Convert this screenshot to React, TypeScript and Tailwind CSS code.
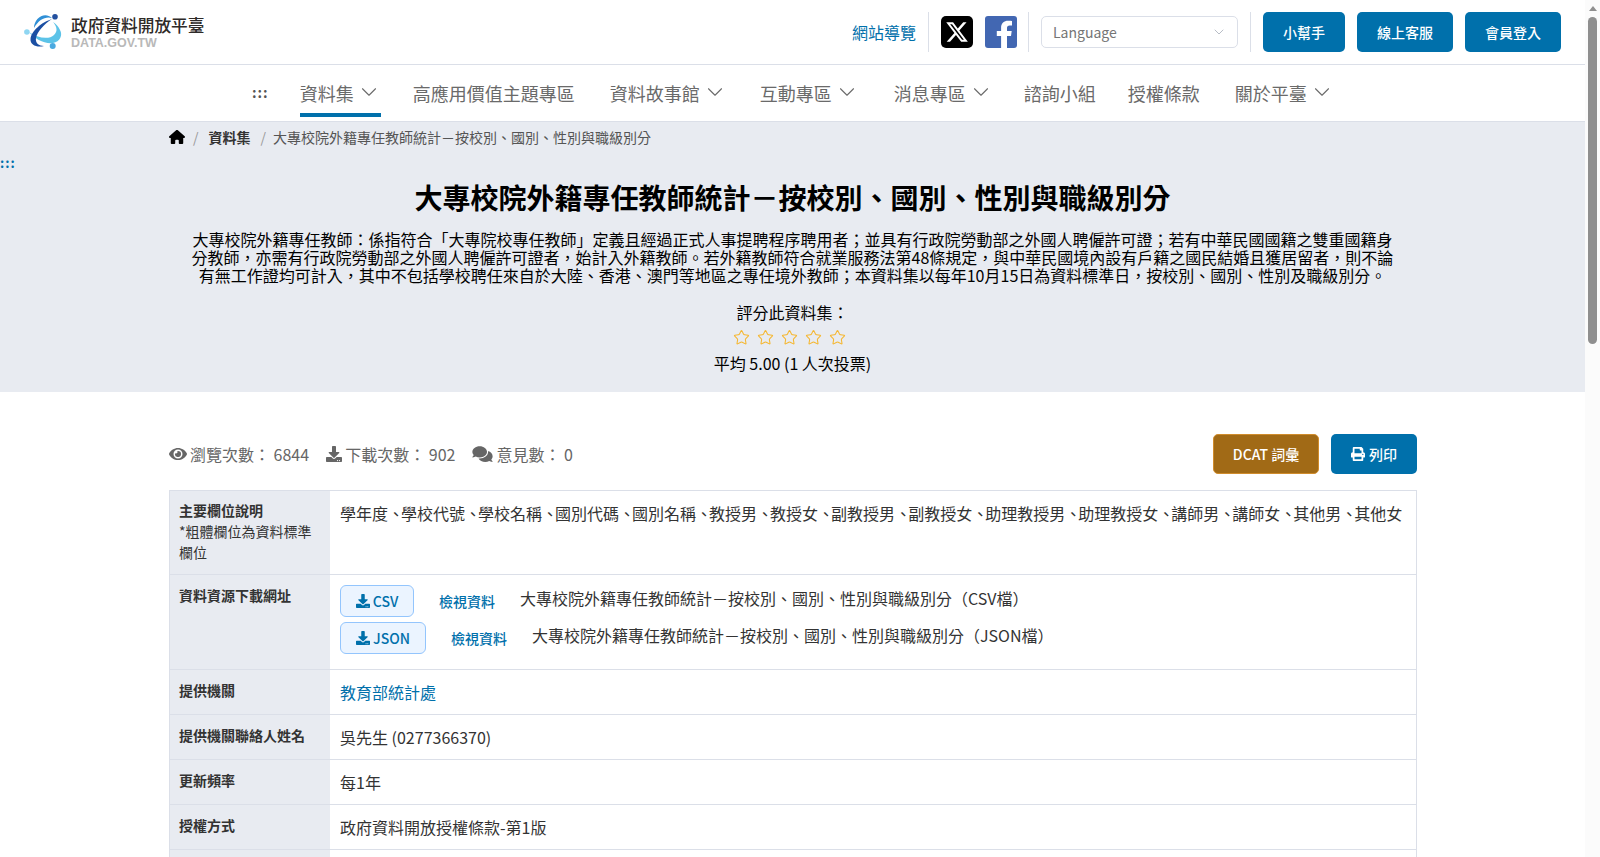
import React from 'react'
import { ChevronDown, Star } from 'lucide-react'
import { FaComments, FaDownload, FaEye, FaPrint } from 'react-icons/fa'
import { FaHouse, FaXTwitter } from 'react-icons/fa6'

const navItems = [
  { label: '資料集', caret: true, active: true, cls: 'ml-[31px]' },
  { label: '高應用價值主題專區', cls: 'ml-[35px]' },
  { label: '資料故事館', caret: true, cls: 'ml-[35px]' },
  { label: '互動專區', caret: true, cls: 'ml-9' },
  { label: '消息專區', caret: true, cls: 'ml-[38px]' },
  { label: '諮詢小組', cls: 'ml-[34px]' },
  { label: '授權條款', cls: 'ml-8' },
  { label: '關於平臺', caret: true, cls: 'ml-[35px]' },
]

const fields = '學年度、學校代號、學校名稱、國別代碼、國別名稱、教授男、教授女、副教授男、副教授女、助理教授男、助理教授女、講師男、講師女、其他男、其他女'

function Logo() {
  return (
    <svg viewBox="0 0 42 42" className="w-[42px] h-[42px]">
      <path d="M5 21 C11 28 20 33 29 32 C36 31 39 24 36 19 C34 15 32 13 29 11 C33 16 34 20 30 24 C25 29 13 27 5 21Z" fill="#5cc3e8" />
      <path d="M28 8 C18 11 7 20 6.500 28 C6 34 13 37 20 35 C15 35 11 32 12 27 C13 21 20 13 28 8Z" fill="#1b4fa3" />
      <path d="M10 17 C10 8 20 0 28 7 C22 5 15 8 10 17Z" fill="#2f8fd6" />
      <circle cx="31" cy="5.700" r="2.800" fill="#23509f" />
      <circle cx="2.900" cy="21" r="2.800" fill="#8fd6f2" />
      <circle cx="28.700" cy="35" r="3" fill="#4aa9e0" />
    </svg>
  )
}

function Header() {
  return (
    <header className="h-[65px] border-b border-[#dbdfe8] flex items-center pl-[24px] pr-[24px]">
      <div className="flex items-center gap-[5px]">
        <Logo />
        <div>
          <div className="text-[16.7px] leading-[22px] font-medium text-[#2e2a28]">政府資料開放平臺</div>
          <div className="text-[12.5px] leading-[14px] font-bold text-[#b9b9b9] font-['Liberation_Sans',sans-serif]">DATA.GOV.TW</div>
        </div>
      </div>
      <div className="ml-auto flex items-center">
        <a className="text-[#0070ab] text-[16px] mr-[12px]">網站導覽</a>
        <div className="w-px h-10 bg-[#dbdfe8]" />
        <div className="w-[32px] h-[32px] ml-[12px] rounded-[5px] bg-black flex items-center justify-center">
          <FaXTwitter className="w-[24px] h-[24px] text-white" />
        </div>
        <svg viewBox="0 0 32 32" className="w-[32px] h-[32px] ml-[12px]">
          <rect width="32" height="32" rx="3" fill="#4267b2" />
          <path d="M22 32V20h4l.7-5H22v-3c0-1.6.7-2.6 2.7-2.6H27V5c-.9-.1-2.3-.3-3.9-.3-4 0-7 2.400-7 6.900V15h-4.300v5h4.300v12z" fill="#fff" />
        </svg>
        <div className="w-px h-10 bg-[#dbdfe8] ml-[11px]" />
        <div className="w-[197px] h-[32px] ml-[12px] border border-[#dbdfe8] rounded-[5px] pl-[11px] pr-[10px] flex items-center justify-between text-[#757575] text-[14px]">
          <span>Language</span>
          <ChevronDown className="w-[16px] h-[16px] text-[#aab0bb]" strokeWidth={1.25} />
        </div>
        <div className="w-px h-10 bg-[#dbdfe8] ml-[12px]" />
        <a className="w-[82px] h-10 ml-[12px] rounded-[5px] bg-[#0070ab] text-white text-[14px] font-medium flex items-center justify-center">小幫手</a>
        <a className="w-[96px] h-10 ml-[12px] rounded-[5px] bg-[#0070ab] text-white text-[14px] font-medium flex items-center justify-center">線上客服</a>
        <a className="w-[96px] h-10 ml-[12px] rounded-[5px] bg-[#0070ab] text-white text-[14px] font-medium flex items-center justify-center">會員登入</a>
      </div>
    </header>
  )
}

function Nav() {
  return (
    <nav className="h-[57px] border-b border-[#dbdfe8] flex items-stretch pl-[252px] text-[18px] text-[#6a6a6a]">
      <span className="flex items-center text-[14px] font-bold tracking-[1px] pb-[1px] text-[#555]">:::</span>
      {navItems.map((item) => (
        <a key={item.label} className={`relative flex items-center ${item.cls}`}>
          {item.label}
          {item.caret && <ChevronDown className="w-[26px] h-[26px] ml-[2px] mr-[-4px] -translate-y-px" strokeWidth={1} />}
          {item.active && <span className="absolute left-0 right-[-3px] bottom-[4px] h-[4px] bg-[#0070ab]" />}
        </a>
      ))}
    </nav>
  )
}

function Hero() {
  return (
    <section className="h-[270px] bg-[#e8ebf1] text-black">
      <div className="pl-[169px] pt-[2px] flex items-center h-[28px] text-[14px] leading-[20px]">
        <FaHouse className="w-[16px] h-[16px] text-black" />
        <span className="mx-[8px] text-[#9a9a9a]">/</span>
        <span className="font-bold text-[#333] mx-[2px]">資料集</span>
        <span className="ml-[8px] mr-[7px] text-[#9a9a9a]">/</span>
        <span className="text-[#555]">大專校院外籍專任教師統計－按校別、國別、性別與職級別分</span>
      </div>
      <div className="h-[18px] mt-[4px] text-[#0070ab] text-[13px] leading-[18px] font-bold tracking-[1px]">:::</div>
      <h1 className="mt-[7px] text-[28px] leading-[36px] font-bold text-center">大專校院外籍專任教師統計－按校別、國別、性別與職級別分</h1>
      <p className="mt-[15px] mx-auto w-[1208px] text-center text-[16px] leading-[18px]">
        大專校院外籍專任教師：係指符合「大專院校專任教師」定義且經過正式人事提聘程序聘用者；並具有行政院勞動部之外國人聘僱許可證；若有中華民國國籍之雙重國籍身分教師，亦需有行政院勞動部之外國人聘僱許可證者，始計入外籍教師。若外籍教師符合就業服務法第48條規定，與中華民國境內設有戶籍之國民結婚且獲居留者，則不論有無工作證均可計入，其中不包括學校聘任來自於大陸、香港、澳門等地區之專任境外教師；本資料集以每年10月15日為資料標準日，按校別、國別、性別及職級別分。
      </p>
      <div className="mt-[16px] text-center text-[16px] leading-[24px]">評分此資料集：</div>
      <div className="flex justify-center gap-[7px] mt-[5px] pr-[7px]">
        {[0, 1, 2, 3, 4].map((i) => (
          <Star key={i} className="w-[17px] h-[17px] text-[#f5b731]" strokeWidth={1.5} />
        ))}
      </div>
      <div className="mt-[5px] text-center text-[16px] leading-[24px]">平均 5.00 (1 人次投票)</div>
    </section>
  )
}

function Stat({ icon, label, value }: { icon: React.ReactNode; label: string; value: string }) {
  return (
    <span className="flex items-center gap-[3px]">
      {icon}
      <span>{label}： {value}</span>
    </span>
  )
}

function DownloadRow({ format, width, name, last }: { format: string; width: string; name: string; last?: boolean }) {
  return (
    <div className={`flex items-center ${last ? '' : 'mb-[5px]'}`}>
      <a className={`${width} h-[32px] rounded-[6px] border border-[#93c5fd] bg-[#ebf4ff] text-[#0070ab] text-[14px] font-medium flex items-center justify-center gap-[3px]`}>
        <FaDownload className="w-[14px] h-[14px]" />
        {format}
      </a>
      <a className="ml-[25px] text-[#0070ab] text-[14px] font-medium">檢視資料</a>
      <span className="ml-[25px] text-[16px] leading-[24px] text-[#333] -translate-y-[3px]">{name}</span>
    </div>
  )
}

function Row({ th, children, tdCls = 'py-[10px]' }: { th: React.ReactNode; children?: React.ReactNode; tdCls?: string }) {
  return (
    <div className="flex border-b border-[#dbdfe8]">
      <div className="w-[160px] shrink-0 bg-[#e8ebf1] pl-[9px] pr-[10px] py-[10px] text-[14px] leading-[21px] text-[#333]">{th}</div>
      <div className={`flex-1 min-w-0 px-[10px] text-[16px] leading-[24px] text-[#333] ${tdCls}`}>{children}</div>
    </div>
  )
}

function Content() {
  return (
    <section className="w-[1248px] ml-[169px]">
      <div className="mt-[42px] flex items-center h-[40px]">
        <div className="flex items-center gap-[17px] text-[16px] text-[#666]">
          <Stat icon={<FaEye className="w-[18px] h-[18px]" />} label="瀏覽次數" value="6844" />
          <Stat icon={<FaDownload className="w-[16px] h-[16px]" />} label="下載次數" value="902" />
          <Stat icon={<FaComments className="w-[21px] h-[18px]" />} label="意見數" value="0" />
        </div>
        <a className="ml-auto w-[106px] h-10 rounded-[5px] bg-[#a16a16] border border-[#d08c2c] text-white text-[14px] font-medium flex items-center justify-center">DCAT 詞彙</a>
        <a className="ml-[12px] w-[86px] h-10 rounded-[5px] bg-[#0070ab] text-white text-[14px] font-medium flex items-center justify-center gap-[4px]">
          <FaPrint className="w-[14px] h-[14px]" />
          列印
        </a>
      </div>
      <div className="mt-[16px] border-x border-t border-[#dbdfe8]">
        <Row th={<div className="-mt-px mb-px"><div className="font-bold">主要欄位說明</div><div>*粗體欄位為資料標準欄位</div></div>}>
          {fields.split('、').map((f, i) => (
            <span key={f}>{i > 0 && <span className="inline-block w-[13px]">、</span>}{f}</span>
          ))}
        </Row>
        <Row tdCls="pt-[10px] pb-[15px]" th={<div className="font-bold">資料資源下載網址</div>}>
          <DownloadRow format="CSV" width="w-[74px]" name="大專校院外籍專任教師統計－按校別、國別、性別與職級別分（CSV檔）" />
          <DownloadRow format="JSON" width="w-[86px]" name="大專校院外籍專任教師統計－按校別、國別、性別與職級別分（JSON檔）" last />
        </Row>
        <Row th={<div className="font-bold">提供機關</div>}>
          <a className="text-[#0070ab]">教育部統計處</a>
        </Row>
        <Row th={<div className="font-bold">提供機關聯絡人姓名</div>}>吳先生 (0277366370)</Row>
        <Row th={<div className="font-bold">更新頻率</div>}>每1年</Row>
        <Row th={<div className="font-bold">授權方式</div>}>政府資料開放授權條款-第1版</Row>
        <Row th={<div>&nbsp;</div>} />
      </div>
    </section>
  )
}

export default function App() {
  return (
    <div className="h-screen overflow-hidden flex bg-white font-['Noto_Sans_CJK_TC','Noto_Sans',sans-serif]">
      <main className="flex-1 min-w-0">
        <Header />
        <Nav />
        <Hero />
        <Content />
      </main>
      <aside className="w-[15px] shrink-0 bg-[#fbfbfb] flex flex-col items-center">
        <div className="mt-[6px] w-0 h-0 border-x-[4px] border-x-transparent border-b-[5px] border-b-[#8f8f8f]" />
        <div className="mt-[6px] w-[9px] h-[327px] rounded-full bg-[#8f8f8f]" />
      </aside>
    </div>
  )
}
